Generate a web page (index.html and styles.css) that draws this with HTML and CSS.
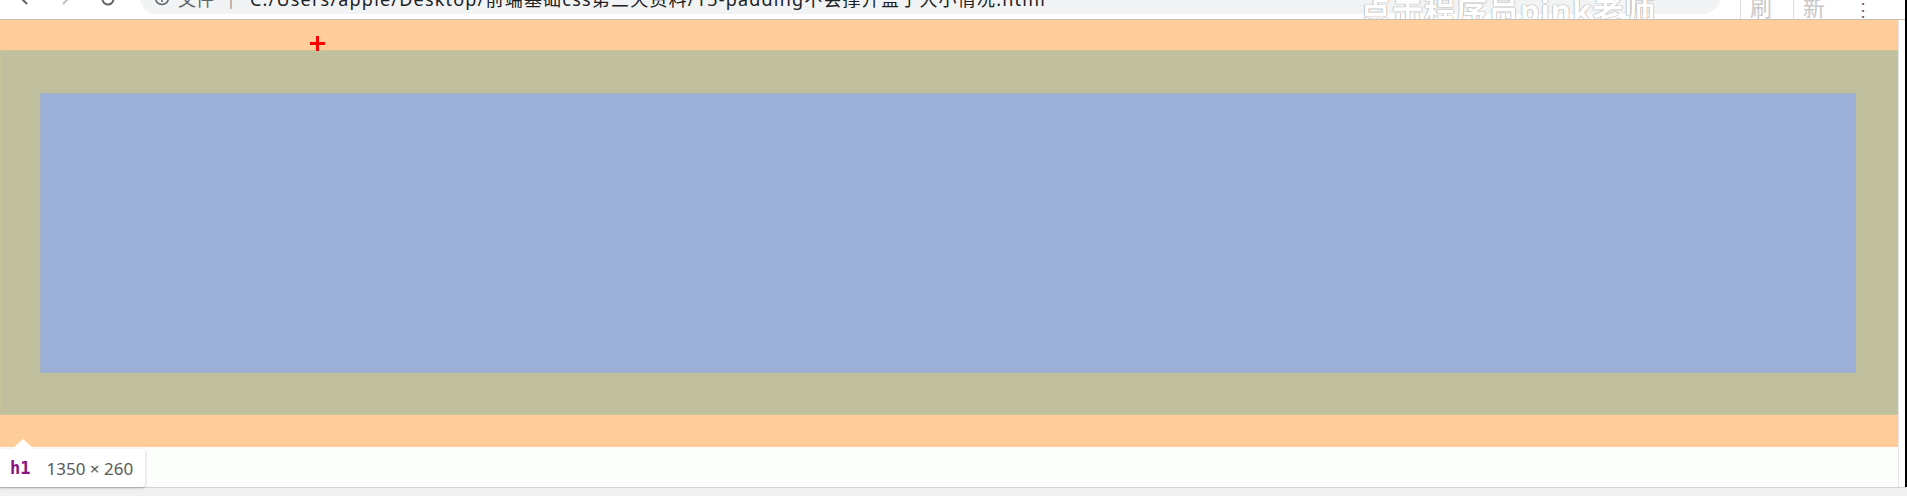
FILE: index.html
```html
<!DOCTYPE html>
<html lang="zh">
<head>
<meta charset="utf-8">
<title>padding</title>
<link rel="stylesheet" href="styles.css">
</head>
<body>
<div class="window">
  <div class="chrome">
    <div class="navs">
      <svg class="nav back" width="16" height="16" viewBox="0 0 16 16"><path d="M14 8H3M8 3L3 8l5 5" fill="none" stroke="#5f6368" stroke-width="2"/></svg>
      <svg class="nav fwd" width="16" height="16" viewBox="0 0 16 16"><path d="M2 8h11M8 3l5 5-5 5" fill="none" stroke="#bdc1c6" stroke-width="2"/></svg>
      <svg class="nav reload" width="18" height="18" viewBox="0 0 18 18"><path d="M14.5 9A5.5 5.5 0 1 1 12.9 5.1" fill="none" stroke="#5f6368" stroke-width="2"/><path d="M10 2h5v5z" fill="#5f6368"/></svg>
    </div>
    <div class="omnibox">
      <svg class="info" width="16" height="16" viewBox="0 0 16 16"><circle cx="8" cy="8" r="6.5" fill="none" stroke="#5f6368" stroke-width="1.5"/><path d="M8 7v5M8 4.5v1" stroke="#5f6368" stroke-width="1.5"/></svg>
      <span class="scheme">文件</span>
      <span class="sep">|</span>
      <span class="url">C:/Users/apple/Desktop/前端基础css第三天资料/13-padding不会撑开盒子大小情况.html</span>
    </div>
    <div class="watermark">点击程序员pink老师</div>
    <div class="ext">
      <span class="extbtn">刷</span>
      <span class="extbtn">新</span>
      <span class="menu">⋮</span>
    </div>
  </div>
  <div class="viewport">
    <div class="page">
      <div class="margin-box">
        <div class="padding-box">
          <div class="content-box"></div>
        </div>
      </div>
      <span class="cursor"></span>
      <div class="tooltip">
        <span class="arrow"></span>
        <span class="tag">h1</span>
        <span class="dims">1350 × 260</span>
      </div>
    </div>
    <div class="gutter"></div>
  </div>
</div>
<div class="statusbar"></div>
</body>
</html>
```
FILE: styles.css
```css
html, body {
  margin: 0;
  padding: 0;
  overflow: hidden;
  background: #ffffff;
  font-family: "Noto Sans", "Noto Sans CJK SC", sans-serif;
}

.window {
  width: 1905px;
  height: 487px;
  border-right: 2px solid #000;
  display: flex;
  flex-direction: column;
}

.chrome {
  height: 19px;
  flex: none;
  overflow: hidden;
  display: flex;
  align-items: flex-start;
  background: #ffffff;
  border-bottom: 1px solid #cdbfb1;
  position: relative;
}

.navs {
  display: flex;
  align-items: center;
  height: 26px;
  margin-top: -14px;
  padding-left: 19px;
  width: 121px;
  flex: none;
}

.nav { flex: none; }
.back { margin-right: 20px; }
.fwd { margin-right: 28px; }

.omnibox {
  flex: none;
  width: 1580px;
  height: 32px;
  margin-top: -18px;
  background: #f1f3f4;
  border-radius: 16px;
  display: flex;
  align-items: center;
  padding-left: 14px;
  box-sizing: border-box;
  font-size: 18px;
  color: #202124;
  white-space: nowrap;
}

.info { flex: none; margin-right: 8px; }
.scheme { color: #5f6368; }
.sep { color: #9aa0a6; margin: 0 14px 0 12px; }
.url { color: #202124; letter-spacing: 1.2px; }

.watermark {
  position: absolute;
  left: 1360px;
  top: -14px;
  font-size: 31px;
  font-weight: 700;
  color: #ffffff;
  text-shadow: 0 0 1px #a8a8a8, 0 0 1px #a8a8a8, 0 0 1px #a8a8a8;
  white-space: nowrap;
  letter-spacing: 1px;
}

.ext {
  position: absolute;
  left: 1740px;
  top: -10px;
  display: flex;
  align-items: center;
  gap: 12px;
  font-size: 22px;
  color: #c9c9c9;
}

.extbtn {
  width: 40px;
  text-align: center;
  border-left: 1px solid #dddddd;
}

.menu {
  color: #5f6368;
  font-size: 18px;
  margin-left: 8px;
  margin-top: 6px;
}

.viewport {
  flex: 1;
  display: flex;
  background: #fcfefc;
}

.page {
  width: 1898px;
  flex: none;
  position: relative;
}

.margin-box {
  background: #fecd99;
  padding: 30px 0 32px;
}

.padding-box {
  background: #c0c09e;
  padding: 43px 42px 42px 40px;
  box-shadow: inset 0 0 0 1px #c8c39a;
}

.content-box {
  height: 280px;
  background: #9cb0d7;
  box-shadow: inset 0 0 0 1px #a4b0c4;
}

.cursor {
  position: absolute;
  left: 310px;
  top: 16px;
  width: 15px;
  height: 15px;
  background:
    linear-gradient(#ff0000, #ff0000) center / 15px 3px no-repeat,
    linear-gradient(#ff0000, #ff0000) center / 3px 15px no-repeat;
}

.tooltip {
  position: absolute;
  left: 0;
  top: 429px;
  height: 38px;
  padding: 0 12px 0 10px;
  display: flex;
  align-items: center;
  gap: 16px;
  background: #ffffff;
  border-radius: 0 3px 3px 0;
  box-shadow: 0 1px 3px rgba(0, 0, 0, 0.25);
  font-size: 17px;
  white-space: nowrap;
}

.arrow {
  position: absolute;
  left: 12px;
  top: -10px;
  width: 0;
  height: 0;
  border-left: 11px solid transparent;
  border-right: 11px solid transparent;
  border-bottom: 10px solid #ffffff;
}

.tag {
  color: #881280;
  font-weight: 700;
  font-family: "DejaVu Sans Mono", monospace;
  font-size: 17px;
}

.dims {
  color: #5a5a5a;
}

.gutter {
  flex: 1;
  background: #ffffff;
  border-left: 1px solid #e4e4e4;
}

.statusbar {
  height: 9px;
  background: #f1f1f1;
  border-top: 1px solid #d3d3d3;
}
```
